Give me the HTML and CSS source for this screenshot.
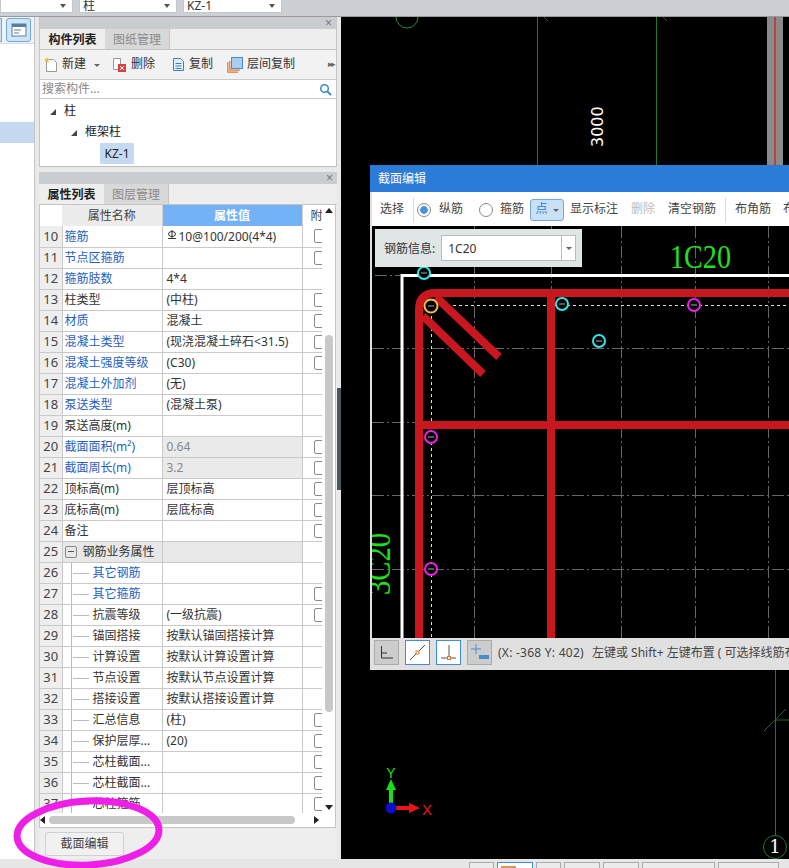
FILE: index.html
```html
<!DOCTYPE html>
<html lang="zh">
<head>
<meta charset="utf-8">
<title>截面编辑</title>
<link rel="stylesheet" href="styles.css">
</head>
<body>
<header class="topbar">
  <div class="combo c1"><span></span><i class="caret"></i></div>
  <div class="combo c2"><span>柱</span><i class="caret"></i></div>
  <div class="combo c3"><span>KZ-1</span><i class="caret"></i></div>
</header>
<main class="main">
  <nav class="rail">
    <div class="rail-tools">
      <span class="rail-stub"></span>
      <span class="rail-btn"><svg width="16" height="14" viewBox="0 0 16 14"><rect x="1" y="1" width="14" height="12" fill="#fff" stroke="#5a7f9c"/><rect x="1" y="1" width="14" height="3" fill="#5a7f9c"/><path d="M3 7h7M3 10h5" stroke="#5a7f9c"/></svg></span>
    </div>
    <div class="rail-sel"></div>
  </nav>
  <section class="column">
    <div class="panel list-panel">
      <div class="strip"><span class="close">×</span></div>
      <div class="tabs"><span class="tab on">构件列表</span><span class="tab">图纸管理</span></div>
      <div class="tools">
        <svg class="ti t-new" width="14" height="15" viewBox="0 0 14 15"><path d="M2.500 2.500h7l3 3v9h-10z" fill="#fff" stroke="#999"/><path d="M3 0l.8 2 2 .3-1.500 1.400.4 2-1.700-1-1.700 1 .4-2L.2 2.300l2-.3z" fill="#f2b632"/></svg>
        <span class="tl">新建</span><i class="mini-caret"></i>
        <svg class="ti t-del" width="15" height="15" viewBox="0 0 15 15"><path d="M1.500 1.500h7v11h-7z" fill="#fff" stroke="#999"/><rect x="6" y="7" width="8" height="8" fill="#d9403a"/><path d="M8 9l4 4M12 9l-4 4" stroke="#fff"/></svg>
        <span class="tl">删除</span>
        <svg class="ti t-copy" width="13" height="15" viewBox="0 0 13 15"><path d="M1.500 1.500h7l3 3v9h-10z" fill="#e3eefa" stroke="#3d7fc4"/><path d="M3.500 6.500h6M3.500 9h6M3.500 11.500h6" stroke="#3d7fc4"/></svg>
        <span class="tl">复制</span>
        <svg class="ti t-floor" width="16" height="16" viewBox="0 0 16 16"><path d="M.8 5v10.200H11" fill="none" stroke="#e2762b" stroke-width="1.200"/><path d="M2.800 4v9.200H13" fill="none" stroke="#e2762b" stroke-width="1.200"/><rect x="4.500" y=".5" width="11" height="11" fill="#a9cdf0" stroke="#4a8bd0"/></svg>
        <span class="tl">层间复制</span>
        <span class="more">▸▸</span>
      </div>
      <div class="search"><span>搜索构件...</span><svg width="13" height="13" viewBox="0 0 13 13"><circle cx="5.500" cy="5.500" r="3.800" fill="none" stroke="#3c8ac9" stroke-width="1.500"/><path d="M8.500 8.500l3.500 3.500" stroke="#3c8ac9" stroke-width="1.800"/></svg></div>
      <div class="tree">
        <div class="node n1"><i class="tri"></i>柱</div>
        <div class="node n2"><i class="tri"></i>框架柱</div>
        <div class="node n3"><span class="picked">KZ-1</span></div>
      </div>
    </div>
    <div class="panel prop-panel">
      <div class="strip"><span class="close">×</span></div>
      <div class="tabs"><span class="tab on">属性列表</span><span class="tab">图层管理</span></div>
      <div class="grid-wrap">
        <div class="grid-clip">
          <table class="props">
            <colgroup><col class="cn"><col class="cname"><col class="cval"><col class="cchk"></colgroup>
            <thead><tr><th class="corner"></th><th>属性名称</th><th class="active">属性值</th><th class="attach">附</th></tr></thead>
            <tbody>
              <tr><td class="num">10</td><td class="blue">箍筋</td><td><svg class="sym" width="12" height="10" viewBox="0 0 12 10"><ellipse cx="5" cy="4" rx="3.500" ry="2.500" fill="none" stroke="#333"/><path d="M1 8.500h8M5 0v9" stroke="#333"/></svg>10@100/200(4*4)</td><td><i class="chk"></i></td></tr>
              <tr><td class="num">11</td><td class="blue">节点区箍筋</td><td></td><td><i class="chk"></i></td></tr>
              <tr><td class="num">12</td><td class="blue">箍筋肢数</td><td>4*4</td><td></td></tr>
              <tr><td class="num">13</td><td>柱类型</td><td>(中柱)</td><td><i class="chk"></i></td></tr>
              <tr><td class="num">14</td><td class="blue">材质</td><td>混凝土</td><td><i class="chk"></i></td></tr>
              <tr><td class="num">15</td><td class="blue">混凝土类型</td><td>(现浇混凝土碎石&lt;31.5)</td><td><i class="chk"></i></td></tr>
              <tr><td class="num">16</td><td class="blue">混凝土强度等级</td><td>(C30)</td><td><i class="chk"></i></td></tr>
              <tr><td class="num">17</td><td class="blue">混凝土外加剂</td><td>(无)</td><td></td></tr>
              <tr><td class="num">18</td><td class="blue">泵送类型</td><td>(混凝土泵)</td><td></td></tr>
              <tr><td class="num">19</td><td>泵送高度(m)</td><td></td><td></td></tr>
              <tr><td class="num">20</td><td class="blue">截面面积(m²)</td><td class="locked">0.64</td><td><i class="chk"></i></td></tr>
              <tr><td class="num">21</td><td class="blue">截面周长(m)</td><td class="locked">3.2</td><td><i class="chk"></i></td></tr>
              <tr><td class="num">22</td><td>顶标高(m)</td><td>层顶标高</td><td><i class="chk"></i></td></tr>
              <tr><td class="num">23</td><td>底标高(m)</td><td>层底标高</td><td><i class="chk"></i></td></tr>
              <tr><td class="num">24</td><td>备注</td><td></td><td><i class="chk"></i></td></tr>
              <tr><td class="num">25</td><td class="group"><i class="minus"></i>钢筋业务属性</td><td class="group"></td><td></td></tr>
              <tr><td class="num">26</td><td class="blue sub">其它钢筋</td><td></td><td></td></tr>
              <tr><td class="num">27</td><td class="blue sub">其它箍筋</td><td></td><td><i class="chk"></i></td></tr>
              <tr><td class="num">28</td><td class="sub">抗震等级</td><td>(一级抗震)</td><td><i class="chk"></i></td></tr>
              <tr><td class="num">29</td><td class="sub">锚固搭接</td><td>按默认锚固搭接计算</td><td></td></tr>
              <tr><td class="num">30</td><td class="sub">计算设置</td><td>按默认计算设置计算</td><td></td></tr>
              <tr><td class="num">31</td><td class="sub">节点设置</td><td>按默认节点设置计算</td><td></td></tr>
              <tr><td class="num">32</td><td class="sub">搭接设置</td><td>按默认搭接设置计算</td><td></td></tr>
              <tr><td class="num">33</td><td class="sub">汇总信息</td><td>(柱)</td><td><i class="chk"></i></td></tr>
              <tr><td class="num">34</td><td class="sub">保护层厚...</td><td>(20)</td><td><i class="chk"></i></td></tr>
              <tr><td class="num">35</td><td class="sub">芯柱截面...</td><td></td><td><i class="chk"></i></td></tr>
              <tr><td class="num">36</td><td class="sub">芯柱截面...</td><td></td><td><i class="chk"></i></td></tr>
              <tr><td class="num">37</td><td class="sub">芯柱箍筋</td><td></td><td><i class="chk"></i></td></tr>
            </tbody>
          </table>
          <div class="vscroll"><i class="up"></i><span class="vthumb"></span><i class="down"></i></div>
        </div>
        <div class="hscroll"><i class="left"></i><span class="hthumb"></span><i class="right"></i></div>
      </div>
      <div class="foot"><button class="edit-btn">截面编辑</button></div>
    </div>
  </section>
  <div class="splitter"><span></span></div>
  <section class="canvas">
    <svg class="cad" viewBox="341 17 448 842" width="448" height="842">
      <path d="M396 17a11 11 0 0 0 22 0" fill="none" stroke="#2c8a3a"/>
      <path d="M537.500 17V165M656.500 17V165M775.500 670V835" stroke="#1f7a2a" fill="none"/>
      <path d="M544 17l4 4M663 17l4 4" stroke="#1f5f2a"/>
      <rect x="767" y="17" width="16" height="148" fill="#8a8a8a"/>
      <path d="M775 17V165" stroke="#c8282a" stroke-width="1.500"/>
      <path d="M764 731l22-22M775 720h14" stroke="#1f6a2a" fill="none"/>
      <text class="dim" transform="translate(603 147) rotate(-90)">3000</text>
      <circle cx="775" cy="847" r="11.500" fill="none" stroke="#1f7a2a"/>
      <text class="mark" x="775" y="853">1</text>
      <path d="M391 808V788" stroke="#18e018" stroke-width="4"/>
      <path d="M391 779l-5 11h10z" fill="#18e018"/>
      <path d="M391 808h20" stroke="#ea1616" stroke-width="4"/>
      <path d="M420 808l-11-5v10z" fill="#ea1616"/>
      <circle cx="391" cy="808" r="5.500" fill="#0a10c8"/>
      <text class="ax-y" x="391" y="778">Y</text>
      <text class="ax-x" x="427" y="815">X</text>
    </svg>
    <div class="dialog">
      <div class="dlg-title">截面编辑</div>
      <div class="dlg-tools">
        <span class="dt select">选择</span><i class="sep"></i>
        <i class="radio on"></i><span class="dt r1">纵筋</span>
        <i class="radio r2"></i><span class="dt r3">箍筋</span>
        <span class="pt-btn">点<i class="mini-caret"></i></span>
        <span class="dt show">显示标注</span>
        <span class="dt off">删除</span>
        <span class="dt clear">清空钢筋</span><i class="sep"></i>
        <span class="dt corner-bar">布角筋</span>
        <span class="dt last">布边筋</span>
      </div>
      <div class="dlg-canvas">
        <svg class="section" viewBox="372 226 417 412" width="417" height="412">
          <path class="gr" d="M474.500 226V638M621.500 226V638M695.500 226V638M768.500 226V638M551.500 226V290M375 275.500H400M372 348.500H789M372 422.500H789M372 495.500H789M372 569.500H789"/>
          <path d="M402 638V275.500H789" fill="none" stroke="#fff" stroke-width="3"/>
          <path class="wd" d="M441 305.500H789M431.500 316V638"/>
          <path class="bar" d="M419 638V310q0-17 17-17H789M551 293V638M419 425H789M436 297l63 60M423 316l60 58"/>
          <g class="rebar">
            <circle class="cy" cx="424" cy="273" r="6"/>
            <circle class="ye" cx="431" cy="306" r="6.500"/>
            <circle class="cy" cx="562" cy="304" r="6"/>
            <circle class="cy" cx="599" cy="341" r="6"/>
            <circle class="ma" cx="694" cy="305" r="6"/>
            <circle class="ma" cx="431" cy="437" r="6"/>
            <circle class="ma" cx="431" cy="569" r="6"/>
          </g>
          <path class="ticks" d="M421 273h6M428 306h6M559 304h6M596 341h6M691 305h6M428 437h6M428 569h6"/>
          <text class="lab" x="670" y="268" textLength="61" lengthAdjust="spacingAndGlyphs">1C20</text>
          <text class="lab" transform="translate(390 595) rotate(-90)" textLength="62" lengthAdjust="spacingAndGlyphs">3C20</text>
        </svg>
        <div class="info">
          <span>钢筋信息:</span>
          <div class="info-combo"><span>1C20</span><b><i class="mini-caret dark"></i></b></div>
        </div>
      </div>
      <div class="dlg-status">
        <span class="sb gray"><svg width="17" height="17" viewBox="0 0 17 17"><path d="M3.500 2v12H15M3.500 9H9" fill="none" stroke="#333"/></svg></span>
        <span class="sb lit"><svg width="21" height="21" viewBox="0 0 21 21"><path d="M3 18L18 3" stroke="#555"/><rect x="9" y="9" width="3" height="3" fill="#fff" stroke="#e2762b"/></svg></span>
        <span class="sb lit"><svg width="21" height="21" viewBox="0 0 21 21"><path d="M11 3v15M3 16h15" stroke="#555"/><rect x="9.500" y="14.500" width="3" height="3" fill="#fff" stroke="#e2762b"/></svg></span>
        <span class="sb gray"><svg width="21" height="21" viewBox="0 0 21 21"><path d="M7 2v10M2 7h10" stroke="#4a8bd0"/><rect x="10" y="13" width="10" height="4" fill="#4a8bd0"/></svg></span>
        <span class="st-text"><span class="coords">(X: -368 Y: 402)</span>左键或 Shift+ 左键布置 ( 可选择线筋布置方式 )</span>
      </div>
    </div>
  </section>
</main>
<footer class="statusbar">
  <span class="fb f1"></span><span class="fb f2"><i></i></span><span class="fb f3"></span><span class="fb f4"></span><span class="fb f5"></span><span class="fb f6"></span><span class="fb f7"></span>
</footer>
<svg class="scribble" width="165" height="80" viewBox="0 0 165 80"><ellipse cx="88" cy="38" rx="71" ry="32" transform="rotate(-3 88 38)" fill="none" stroke="#ee1fe6" stroke-width="7"/></svg>
</body>
</html>
```
FILE: styles.css
```css
* { box-sizing: border-box; }
html, body { margin: 0; height: 868px; overflow: hidden; }
body {
  position: relative;
  width: 789px;
  display: flex;
  flex-direction: column;
  background: #e6e6e6;
  color: #222;
  font: 12px/1.2 "Noto Sans", "Noto Sans CJK SC", sans-serif;
}
i { display: block; font-style: normal; }

/* top bar */
.topbar {
  height: 17px;
  flex: none;
  background: #ccd0d4;
  border-bottom: 1px solid #9a9a9a;
  display: flex;
  align-items: flex-start;
  gap: 6px;
}
.combo {
  height: 13px;
  background: #fff;
  border: 1px solid #c8c8c8;
  border-top: 0;
  display: flex;
  justify-content: space-between;
  align-items: flex-end;
  padding: 0 4px 0 3px;
  line-height: 13px;
  overflow: hidden;
  color: #333;
}
.c1 { width: 73px; }
.c2 { width: 98px; }
.c3 { width: 99px; }
.caret {
  width: 0; height: 0;
  margin: 0 2px 4px 0;
  border: 3px solid transparent;
  border-top: 4px solid #555;
  border-bottom: 0;
}

/* main */
.main { flex: 1; min-height: 0; display: flex; }
.rail {
  width: 35px;
  flex: none;
  background: #fff;
  border-right: 1px solid #c4c4c4;
}
.rail-tools {
  height: 27px;
  display: flex;
  justify-content: space-between;
  padding: 1px 3px 0 0;
  border-bottom: 1px solid #dcdcdc;
  background: #f1f1f1;
}
.rail-stub {
  width: 2px; height: 24px;
  background: #c9e0f7;
  border: 1px solid #70a8e0;
  border-left: 0;
}
.rail-btn {
  width: 25px; height: 24px;
  border: 1px solid #70a8e0;
  border-radius: 3px;
  background: #cfe5fa;
  display: flex;
  align-items: center;
  justify-content: center;
}
.rail-sel { height: 21px; margin-top: 78px; background: #c5d9f1; }

.column {
  width: 304px;
  flex: none;
  padding: 0 2px 0 4px;
  display: flex;
  flex-direction: column;
  gap: 5px;
  background: #e9e9e9;
}
.panel { background: #fff; }
.list-panel { height: 150px; border: 1px solid #c4c4c4; border-top: 0; border-bottom-color: #bcbcbc; }
.prop-panel { flex: 1; min-height: 0; background: #eee; }
.strip {
  height: 12px;
  background: #c9cdd0;
  display: flex;
  justify-content: flex-end;
  align-items: center;
  padding-right: 4px;
}
.close { color: #777; font: 12px/12px "Liberation Sans", sans-serif; }
.tabs {
  height: 21px;
  display: flex;
  background: #eee;
  border-bottom: 1px solid #c4c4c4;
}
.tab {
  width: 65px;
  text-align: center;
  line-height: 21px;
  color: #8a8a8a;
  background: #d8d8d8;
  border-right: 1px solid #c4c4c4;
}
.tab.on { background: #eee; color: #222; font-weight: 700; border-right: 0; }

.tools {
  height: 30px;
  background: #f2f2f2;
  border-bottom: 1px solid #c8c8c8;
  display: flex;
  align-items: center;
  padding-left: 4px;
  color: #333;
}
.tl { margin-left: 4px; }
.mini-caret {
  width: 0; height: 0;
  margin: 1px 0 0 5px;
  border: 3px solid transparent;
  border-top: 3px solid #666;
  border-bottom: 0;
}
.tools .mini-caret { margin-left: 8px; }
.t-del { margin-left: 12px; }
.t-copy { margin-left: 17px; }
.t-floor { margin-left: 14px; }
.more { margin-left: auto; margin-right: 2px; color: #666; font-size: 9px; letter-spacing: -2px; }
.search {
  height: 19px;
  background: #fff;
  border-bottom: 1px solid #c8c8c8;
  display: flex;
  align-items: center;
  justify-content: space-between;
  padding: 0 4px 0 2px;
  color: #888;
}
.tree { background: #fff; padding-top: 2px; }
.node { height: 21px; display: flex; align-items: center; color: #222; }
.n1 { padding-left: 10px; }
.n2 { padding-left: 31px; }
.n3 { padding-left: 60px; }
.tri {
  width: 0; height: 0;
  margin-right: 8px;
  border-left: 6px solid transparent;
  border-bottom: 6px solid #444;
}
.picked { width: 34px; height: 21px; line-height: 21px; text-align: center; background: #c5d9f1; }

/* properties */
.grid-wrap { background: #fff; margin-right: 1px; border-left: 1px solid #c4c4c4; border-right: 1px solid #c4c4c4; }
.grid-clip { height: 608px; overflow: hidden; position: relative; }
.props {
  table-layout: fixed;
  width: 282px;
  border-collapse: collapse;
  background: #fff;
}
.cn { width: 22px; }
.cname { width: 100px; }
.cval { width: 140px; }
.cchk { width: 20px; }
.props th {
  height: 21px;
  padding: 1px 0 0;
  background: #ececec;
  font-weight: 400;
  color: #444;
  border-right: 1px solid #d0d0d0;
}
.props th.corner { background: #fff; border: 0; }
.props th.active { background: #73b2f6; color: #fff; font-weight: 700; }
.props th.attach { text-align: left; padding-left: 8px; overflow: hidden; white-space: nowrap; border: 0; background: #fff; }
.props td {
  height: 21px;
  padding: 1px 0 0 2px;
  border-bottom: 1px solid #c9c9c9;
  border-right: 1px solid #c9c9c9;
  white-space: nowrap;
  overflow: hidden;
  position: relative;
  color: #333;
}
.props td:last-child { border-right: 0; padding: 0; }
.props td.num {
  background: #eee;
  color: #444;
  text-align: center;
  padding: 1px 0 0;
  font-size: 13px;
}
.props td.blue { color: #1f5fc4; }
.props td:nth-child(3) { padding-left: 4px; }
.props td.locked { background: #eaeaea; color: #888; }
.props td.group { background: #e8e8e8; }
.props td.sub { padding-left: 30px; }
.props td.sub::before {
  content: "";
  position: absolute;
  left: 8px; top: 0; bottom: -1px;
  border-left: 1px solid #bbb;
}
.props td.sub::after {
  content: "";
  position: absolute;
  left: 10px; top: 10px;
  width: 16px;
  border-top: 1px solid #bbb;
}
.sym { vertical-align: 1px; }
.chk {
  width: 14px; height: 14px;
  margin-left: 11px;
  background: #fff;
  border: 1px solid #8a8a8a;
  border-radius: 2px;
}
.minus {
  display: inline-block;
  vertical-align: -2px;
  width: 12px; height: 12px;
  margin-right: 6px;
  border: 1px solid #888;
  border-radius: 2px;
  background: linear-gradient(#555, #555) center / 6px 1px no-repeat;
}
.vscroll { position: absolute; left: 282px; top: 0; bottom: 0; width: 14px; background: #fff; }
.vthumb {
  position: absolute;
  left: 3px; top: 130px;
  width: 8px; height: 377px;
  background: #c8c8c8;
  border-radius: 4px;
}
.up, .down, .left, .right { position: absolute; width: 0; height: 0; border: 4px solid transparent; }
.up { left: 3px; top: 3px; border-bottom: 5px solid #222; border-top: 0; }
.down { left: 3px; bottom: 3px; border-top: 5px solid #222; border-bottom: 0; }
.hscroll {
  height: 15px;
  position: relative;
  background: #fff;
  border-bottom: 1px solid #c4c4c4;
}
.hthumb {
  position: absolute;
  left: 9px; top: 3px;
  width: 246px; height: 8px;
  background: #c8c8c8;
  border-radius: 4px;
}
.left { left: 0; top: 3px; border-right: 5px solid #222; border-left: 0; }
.right { right: 16px; top: 3px; border-left: 5px solid #222; border-right: 0; }
.foot { height: 31px; padding: 4px 0 0 6px; }
.edit-btn {
  width: 79px; height: 24px;
  padding: 0;
  background: #f1f1f1;
  border: 1px solid #d0d0d0;
  border-radius: 3px;
  color: #444;
  font: inherit;
}

.splitter { width: 2px; flex: none; background: #e9e9e9; position: relative; z-index: 1; }
.splitter span {
  position: absolute;
  left: -2px; top: 371px;
  width: 4px; height: 102px;
  background: #4a5560;
}

/* canvas */
.canvas { flex: 1; min-width: 0; position: relative; background: #000; overflow: hidden; }
.cad { display: block; }
.dim { fill: #fff; font: 16px "DejaVu Sans", sans-serif; }
.mark { fill: #fff; font: 18px "DejaVu Serif", serif; text-anchor: middle; }
.ax-y { fill: #18e018; font: 14px "Liberation Sans", sans-serif; text-anchor: middle; }
.ax-x { fill: #ea1616; font: 15px "Liberation Sans", sans-serif; text-anchor: middle; }

.dialog {
  position: absolute;
  left: 29px; top: 148px;
  width: 430px; height: 505px;
  background: #e0e0e0;
  display: flex;
  flex-direction: column;
  padding-bottom: 3px;
}
.dlg-title {
  height: 27px;
  flex: none;
  background: #2b7cd9;
  color: #fff;
  padding: 7px 0 0 8px;
}
.dlg-tools {
  height: 34px;
  flex: none;
  background: #fff;
  border-left: 2px solid #e0e0e0;
  padding-top: 1px;
  display: flex;
  align-items: center;
  color: #444;
  white-space: nowrap;
}
.dt { flex: none; }
.select { margin-left: 8px; }
.sep { width: 1px; height: 24px; background: #d8d8d8; flex: none; }
.dlg-tools .sep:nth-of-type(1) { margin-left: 9px; }
.radio {
  width: 14px; height: 14px;
  flex: none;
  margin-left: 3px;
  border: 1px solid #888;
  border-radius: 50%;
  background: #fff;
}
.radio.on { background: radial-gradient(circle, #4a90e0 0 3.500px, #fff 4px); }
.r1 { margin-left: 8px; }
.r2 { margin-left: 16px; }
.r3 { margin-left: 7px; }
.pt-btn {
  width: 34px; height: 22px;
  margin-left: 6px;
  flex: none;
  display: flex;
  align-items: center;
  justify-content: center;
  background: #c9e0f7;
  border: 1px solid #70a8e0;
  border-radius: 3px;
  color: #2b7cd9;
}
.show { margin-left: 6px; }
.off { margin-left: 13px; color: #bbb; }
.clear { margin-left: 13px; }
.dlg-tools .clear + .sep { margin-left: 9px; }
.corner-bar { margin-left: 9px; }
.last { margin-left: 12px; }
.dlg-canvas {
  flex: 1;
  min-height: 0;
  position: relative;
  margin-left: 2px;
  background: #000;
}
.section { display: block; }
.gr { fill: none; stroke: #666; stroke-dasharray: 12 3 2 3; }
.wd { fill: none; stroke: #ddd; stroke-dasharray: 3 3; }
.bar { fill: none; stroke: #c8171e; stroke-width: 8; }
.rebar circle { fill: #000; stroke-width: 2; }
.cy { stroke: #2ee6e6; }
.ye { stroke: #f0c040; }
.ma { stroke: #ee1fe6; }
.ticks { stroke: #aaa; }
.lab { fill: #1fe01f; font: 33px "Liberation Serif", serif; }
.info {
  position: absolute;
  left: 3px; top: 3px;
  width: 207px; height: 38px;
  background: #e0e5e6;
  display: flex;
  align-items: center;
  gap: 6px;
  padding: 2px 0 0 9px;
  color: #333;
}
.info-combo {
  width: 135px; height: 26px;
  margin-top: -2px;
  background: #fff;
  border: 1px solid #bbb;
  display: flex;
  justify-content: space-between;
  align-items: center;
  padding: 2px 0 0 6px;
}
.info-combo b {
  width: 14px; height: 24px;
  margin-top: -2px;
  border-left: 1px solid #bbb;
  display: flex;
  align-items: center;
  justify-content: center;
}
.mini-caret.dark { margin: 0; }
.dlg-status {
  height: 29px;
  flex: none;
  display: flex;
  align-items: center;
  gap: 6px;
  padding-left: 4px;
  color: #444;
  white-space: nowrap;
  overflow: hidden;
}
.sb {
  width: 25px; height: 25px;
  flex: none;
  display: flex;
  align-items: center;
  justify-content: center;
}
.sb.gray { background: #ccc; border: 1px solid #aaa; }
.sb.lit { background: #fff; border: 1px solid #3d8ee0; }
.st-text { padding-top: 1px; }
.coords { display: inline-block; width: 94px; letter-spacing: .25px; }

/* bottom */
.statusbar {
  height: 9px;
  flex: none;
  display: flex;
  align-items: flex-start;
  padding: 3px 0 0 469px;
  gap: 3px;
  background: #e6e6e6;
  overflow: hidden;
}
.fb { height: 12px; flex: none; border: 1px solid #aaa; background: #ececec; }
.f1 { width: 25px; }
.f2 { width: 36px; background: #fff; border-color: #3d8ee0; }
.f2 i { width: 15px; height: 4px; margin: 3px 0 0 3px; background: #e2964a; }
.f3 { width: 25px; }
.f4, .f5 { width: 36px; }
.f6 { width: 73px; }
.f7 { width: 61px; }

.scribble { position: absolute; left: 0; top: 795px; pointer-events: none; }
```
